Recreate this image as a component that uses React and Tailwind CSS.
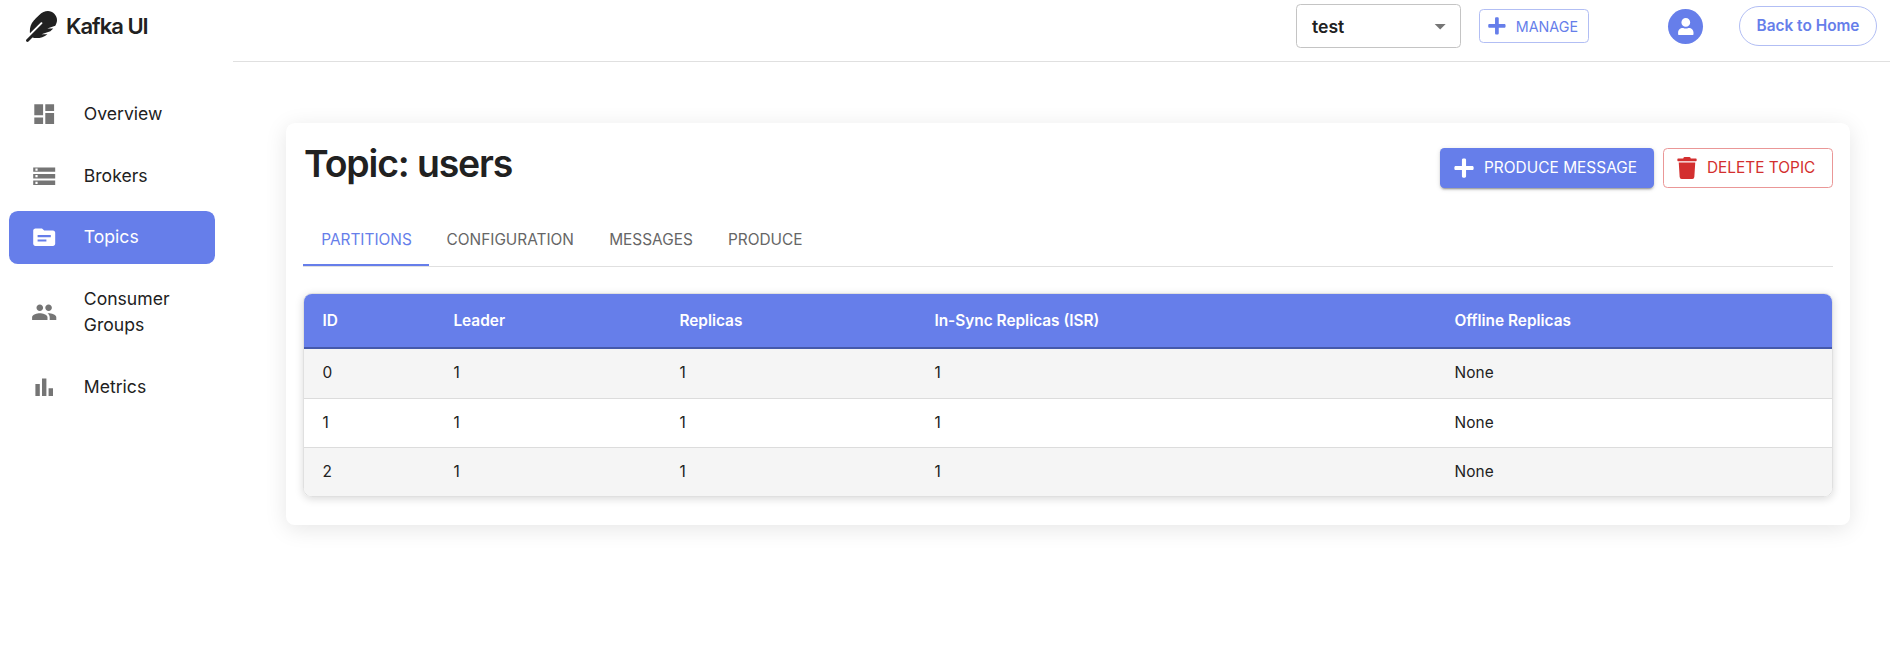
import React from "react";
import { MdDashboard, MdStorage, MdTopic, MdPeople, MdBarChart, MdArrowDropDown } from "react-icons/md";
import { FaFeather, FaPlus, FaTrash, FaUser } from "react-icons/fa";

const nav = [
  { label: "Overview", Icon: MdDashboard },
  { label: "Brokers", Icon: MdStorage },
  { label: "Topics", Icon: MdTopic, active: true },
  { label: "Consumer Groups", Icon: MdPeople },
  { label: "Metrics", Icon: MdBarChart },
];

const tabs = ["PARTITIONS", "CONFIGURATION", "MESSAGES", "PRODUCE"];

const columns = ["ID", "Leader", "Replicas", "In-Sync Replicas (ISR)", "Offline Replicas"];
const rows = [
  ["0", "1", "1", "1", "None"],
  ["1", "1", "1", "1", "None"],
  ["2", "1", "1", "1", "None"],
];

function Sidebar() {
  return (
    <aside className="w-[233px] shrink-0">
      <div className="flex h-[53px] items-center gap-[9px] pl-[26px]">
        <FaFeather className="size-[31px] text-[#212121]" />
        <span className="text-[22px] font-semibold tracking-[-0.045em]">Kafka UI</span>
      </div>
      <nav className="flex flex-col gap-[8.8px] pl-[9px] pr-[18px] pt-[35px]">
        {nav.map(({ label, Icon, active }) => (
          <a
            key={label}
            className={
              active
                ? "flex items-center rounded-[8.8px] bg-[#667eea] py-[13.2px] pl-[22px] pr-[17px] text-white"
                : "flex items-center rounded-[8.8px] py-[13.2px] pl-[22px] pr-[17px]"
            }
          >
            <Icon className={active ? "size-[26.4px] shrink-0" : "size-[26.4px] shrink-0 text-[#757575]"} />
            <span className="ml-[26.4px] text-[17.6px] leading-[26.4px]">{label}</span>
          </a>
        ))}
      </nav>
    </aside>
  );
}

function Header() {
  return (
    <header className="flex h-[62px] items-start justify-end border-b border-[#e0e0e0] pr-[13px]">
      <div className="mt-1 flex h-11 w-[165px] items-center justify-between rounded-[4.4px] border border-[#c4c4c4] pl-[15px] pr-[7px]">
        <span className="pt-[2px] text-[17.6px] font-semibold">test</span>
        <MdArrowDropDown className="size-[26.4px] text-[#757575]" />
      </div>
      <button className="ml-[18px] mt-[9px] flex h-[34px] w-[110px] items-center rounded-[4.4px] border border-[#b2bef4] pl-[7px] text-[14.3px] text-[#667eea]">
        <FaPlus className="mr-[9px] size-[19.8px] shrink-0" />
        <span className="pt-[2px]">MANAGE</span>
      </button>
      <div className="ml-[79px] mt-[9px] flex size-[35px] items-center justify-center rounded-full bg-[#667eea]">
        <FaUser className="size-[17.6px] text-white" />
      </div>
      <button className="ml-9 mt-[6px] h-10 w-[138px] rounded-[22px] border border-[#b2bef4] text-[15.4px] font-semibold text-[#667eea]">
        Back to Home
      </button>
    </header>
  );
}

function PartitionsTable() {
  return (
    <div className="mt-[26px] overflow-hidden rounded-[8.8px] border border-[#e0e0e0] shadow-[0_2px_9px_rgba(0,0,0,0.15)]">
      <table className="w-full table-fixed border-separate border-spacing-0 text-left text-[15.4px]">
        <colgroup>
          <col className="w-[131px]" />
          <col className="w-[226px]" />
          <col className="w-[255px]" />
          <col className="w-[520px]" />
          <col />
        </colgroup>
        <thead>
          <tr className="h-[55px] bg-[#667eea] text-white">
            {columns.map((c) => (
              <th key={c} className="border-b-2 border-[#4559ab] px-[18.4px] font-semibold">
                {c}
              </th>
            ))}
          </tr>
        </thead>
        <tbody>
          {rows.map((r, i) => (
            <tr key={r[0]} className="group h-[49px] first:h-[50px] last:h-[48px] odd:bg-[#f5f5f5]">
              {r.map((v, j) => (
                <td
                  key={j}
                  className={
                    i === rows.length - 1
                      ? "px-[18.4px] tracking-[0.01071em]"
                      : "border-b border-[#dcdcdc] px-[18.4px] tracking-[0.01071em] group-first:pb-[2px]"
                  }
                >
                  {v}
                </td>
              ))}
            </tr>
          ))}
        </tbody>
      </table>
    </div>
  );
}

export default function App() {
  return (
    <div className="flex h-[656px] overflow-hidden bg-white font-['Inter',sans-serif] text-[#212121]">
      <Sidebar />
      <div className="min-w-0 flex-1">
        <Header />
        <main className="ml-[53px] mr-10 mt-[61px] h-[402px] rounded-[8.8px] bg-white px-[17px] shadow-[0_4px_22px_rgba(0,0,0,0.1)]">
          <div className="flex h-[88px] items-start">
            <h1 className="flex-1 pl-px pt-[18px] text-[37.4px] font-semibold leading-[46px] tracking-[-0.03em]">
              Topic: users
            </h1>
            <button className="mt-[25px] flex h-10 w-[214px] items-center rounded-[4.4px] bg-[#667eea] pl-[13px] text-[15.4px] tracking-[0.002em] text-white shadow-[0_3px_1px_-2px_rgba(0,0,0,0.2),0_2px_2px_0_rgba(0,0,0,0.14),0_1px_5px_0_rgba(0,0,0,0.12)]">
              <FaPlus className="mr-[9px] size-[22px] shrink-0" />
              PRODUCE MESSAGE
            </button>
            <button className="ml-[9px] mt-[25px] flex h-10 w-[170px] items-center rounded-[4.4px] border border-[#ea9797] pl-3 text-[15.4px] text-[#d32f2f]">
              <FaTrash className="mr-[9px] size-[22px] shrink-0" />
              DELETE TOPIC
            </button>
          </div>
          <div className="flex h-14 border-b border-[#e0e0e0]">
            {tabs.map((t, i) => (
              <button
                key={t}
                className={
                  i === 0
                    ? "h-[55px] border-b-2 border-[#667eea] pl-[18.2px] pr-[17.2px] pt-[4px] text-[15.4px] text-[#667eea]"
                    : "h-[55px] border-b-2 border-transparent px-[17.6px] pt-[4px] text-[15.4px] text-[#666666]"
                }
              >
                {t}
              </button>
            ))}
          </div>
          <PartitionsTable />
        </main>
      </div>
    </div>
  );
}
